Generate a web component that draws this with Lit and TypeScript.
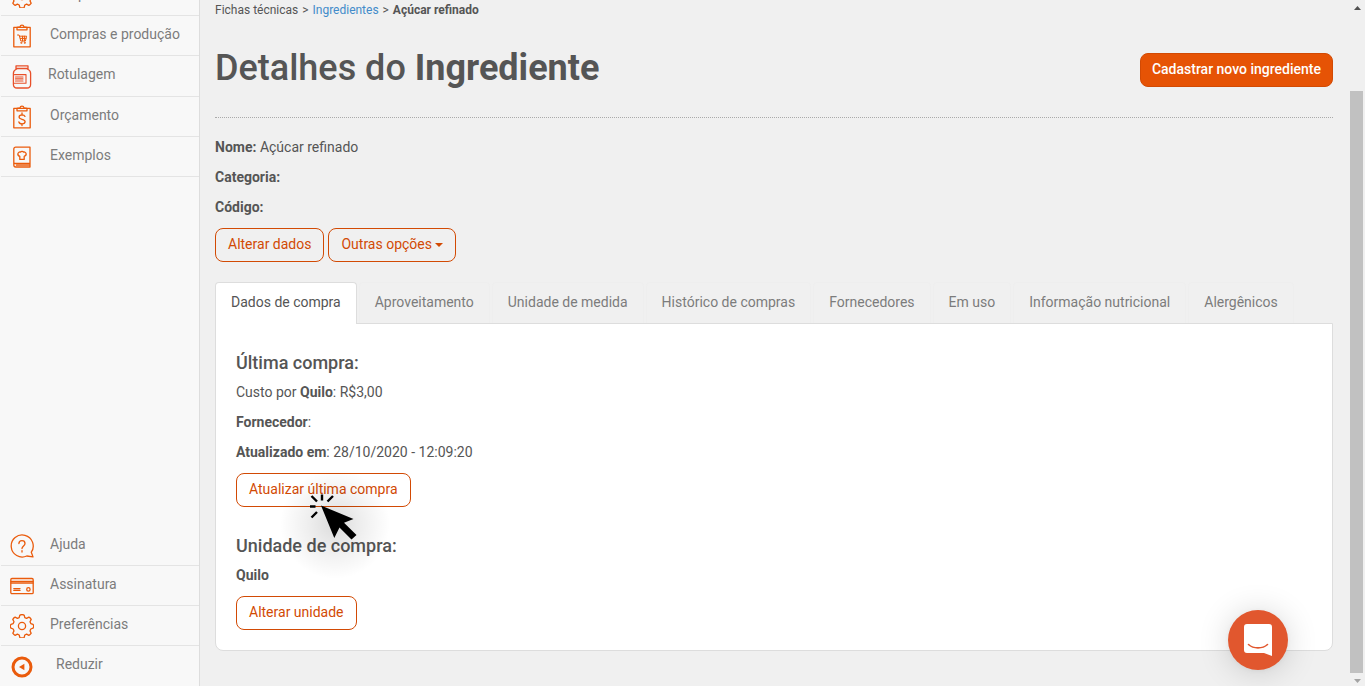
import { LitElement, html, css, svg, nothing } from "lit";
import { customElement, property, state } from "lit/decorators.js";

const gear = svg`<path d="M9.800 1.200Q10.500.6 12 .6t2.200.6l.6 2.400 1.800.8 2.300-1.200q1.200.4 2.300 2.200l-1.200 2.300.8 1.900 2.200.8q.7.8.7 1.900t-.7 1.900l-2.200.8-.8 1.900 1.200 2.300q-1.100 1.800-2.300 2.200l-2.300-1.200-1.800.8-.6 2.400q-.7.600-2.200.6t-2.200-.6l-.6-2.400-1.800-.8-2.300 1.200q-1.200-.4-2.300-2.200l1.200-2.300-.8-1.900-2.200-.8q-.7-.8-.7-1.900t.7-1.900l2.200-.8.8-1.900-1.200-2.300q1.100-1.800 2.300-2.200l2.300 1.200 1.800-.8z"/><circle cx="12" cy="12" r="3.600"/>`;
const clipboard = svg`<path d="M3.800 3.400h16.400v19.400H3.800z"/><path d="M7 3.400v2.400h10V3.400l-3-.6c-.4-2.200-3.600-2.200-4 0z"/>`;

const icons: Record<string, unknown> = {
  gear,
  cart: svg`${clipboard}<path d="M7.500 11h1.600l1.700 6h4.600l1.200-4.800H9.600M10.400 14.400h5.600M12.500 12.200v4.800M14.400 12.200v4.800" stroke-width="1"/><circle cx="11.400" cy="18.800" r=".4"/><circle cx="14.800" cy="18.800" r=".4"/>`,
  jar: svg`<path d="M6 .9h12v2.600H6z"/><path d="M6.600 4C4.400 5 3.400 6.200 3.400 8.200v11c0 2.400 1.200 3.800 3.600 3.800h10c2.400 0 3.600-1.400 3.600-3.800v-11c0-2-1-3.200-3.200-4.200"/><path d="M4.500 9.600h11.500v8.600H4.500M5.500 12h7.500M5.500 13.900h7.500M5.500 16h7.500" stroke-width="1.100"/>`,
  money: svg`${clipboard}<path d="M15 11.400c-.4-1-1.500-1.500-3-1.500-1.700 0-2.900.8-2.900 2.200 0 3 6 1.400 6 4.500 0 1.400-1.200 2.200-3 2.200-1.700 0-2.900-.6-3.200-1.800M12 8v2M12 18.800v1.800"/>`,
  book: svg`<path d="M20 2.200v19.800H5.700c-1.100 0-1.900-.8-1.900-1.900V4c0-1.100.8-1.800 1.900-1.800zM4.500 18.500H20M6.500 20.200h13"/><path d="M9.800 14.400v-3c-3.600-1.400-1.400-5.200.6-4.200.8-1.200 2.500-1.200 3.200 0 2.100-1 4.200 2.800.6 4.200v3z"/>`,
  help: svg`<path d="M21.300 18.200A11 11 0 1 0 16.800 22l6.200.9z"/><path d="M8.900 9.500C9 5.600 15 5.700 15 9.400c0 2.400-3 2.700-3 5.200M12 16.600v1.400"/>`,
  card: svg`<rect x=".8" y="4.500" width="22.400" height="15.200" rx="1.200"/><path d="M1 7.300h22M1 9h22M3.800 14.600H10M3.800 16.400H10"/><circle cx="18.400" cy="15.400" r="1.700"/>`,
  collapse: svg`<circle cx="12" cy="12" r="9" stroke-width="3"/><path d="M14.400 8.800v6.400L9 12z" fill="currentColor" stroke="none"/>`,
};

@customElement("nav-item")
class NavItem extends LitElement {
  @property() icon = "";
  @property() label = "";

  static styles = css`
    :host { display: block; }
    .link {
      display: flex;
      align-items: center;
      height: 39px;
      padding: 0 9px;
      color: #7c7c7c;
      font-size: 14px;
      line-height: 20px;
      text-decoration: none;
    }
    .icon {
      width: 24px;
      height: 24px;
      margin: 1px 16px 0 0;
      flex: none;
      color: #ea5b0c;
      fill: none;
      stroke: currentColor;
      stroke-width: 1.3;
      stroke-linejoin: round;
      stroke-linecap: round;
    }
    .label { margin-bottom: 4px; white-space: nowrap; }
    .indent { margin-left: 6px; }
    .jar { stroke: #e8502a; margin-right: 14px; }
    .tall { height: 40px; }
  `;

  render() {
    return html`<a class="link ${this.icon === "jar" || this.icon === "collapse" ? "tall" : ""}" href="#">
      <svg class="icon ${this.icon}" viewBox="0 0 24 24" aria-hidden="true">${icons[this.icon]}</svg>
      <span class="label ${this.icon === "collapse" ? "indent" : ""}">${this.label}</span>
    </a>`;
  }
}

@customElement("app-root")
class AppRoot extends LitElement {
  @state() private tab = 0;

  private tabs = [
    "Dados de compra",
    "Aproveitamento",
    "Unidade de medida",
    "Histórico de compras",
    "Fornecedores",
    "Em uso",
    "Informação nutricional",
    "Alergênicos",
  ];

  private mainNav = [
    ["gear", "Setup"],
    ["cart", "Compras e produção"],
    ["jar", "Rotulagem"],
    ["money", "Orçamento"],
    ["book", "Exemplos"],
  ];

  private footNav = [
    ["help", "Ajuda"],
    ["card", "Assinatura"],
    ["gear", "Preferências"],
    ["collapse", "Reduzir"],
  ];

  static styles = css`
    :host {
      display: flex;
      height: 100vh;
      overflow: hidden;
      background: #f0f0f0;
      color: #555;
      font: 14px/20px Roboto, "Liberation Sans", sans-serif;
    }
    .sidebar {
      display: flex;
      flex-direction: column;
      justify-content: space-between;
      flex: none;
      width: 200px;
      box-sizing: border-box;
      padding-left: 1px;
      border-right: 1px solid #ddd;
      background: #f8f8f8;
    }
    .group { display: flex; flex-direction: column; }
    .scrolled { margin-top: -24px; }
    .row { border-bottom: 1px solid #e4e4e4; }
    .foot .row:last-child { border-bottom: 0; }
    .main { flex: 1; min-width: 0; padding: 0 16px 0 15px; }
    .crumbs { font-size: 12px; }
    .crumbs a { color: #428bca; text-decoration: none; }
    .sep { padding: 0 1px; }
    .head {
      display: flex;
      align-items: center;
      justify-content: space-between;
      padding: 27px 0 24px;
      margin-bottom: 19px;
      border-bottom: 1px dotted #aaa;
    }
    .title { margin: 0 0 4px; font-size: 36px; line-height: 42px; font-weight: 500; }
    b { font-weight: 700; }
    .text { margin: 0 0 10px; }
    .btn {
      height: 34px;
      padding: 0 12px 2px;
      border: 1px solid #d24a04;
      border-radius: 8px;
      background: transparent;
      color: #d24a04;
      font: inherit;
      white-space: nowrap;
    }
    .primary { background: #e65305; color: #fff; font-weight: 500; padding: 0 11px 2px; }
    .actions { display: flex; gap: 4px; margin: 11px 0 20px; }
    .caret {
      display: inline-block;
      border: 4px solid transparent;
      border-top-color: currentColor;
      border-bottom: 0;
      vertical-align: middle;
    }
    .tabs { display: flex; gap: 2px; }
    .tab {
      height: 41px;
      padding: 0 15px 2px;
      border: 1px solid #eee;
      border-bottom: 0;
      border-radius: 4px 4px 0 0;
      background: transparent;
      color: #7c7c7c;
      font: inherit;
      white-space: nowrap;
    }
    .active {
      height: 42px;
      margin-bottom: -1px;
      padding-bottom: 3px;
      border-color: #ddd;
      background: #fff;
      color: #555;
      z-index: 1;
    }
    .panel {
      padding: 29px 20px 20px;
      border: 1px solid #ddd;
      border-radius: 0 0 8px 8px;
      background: #fff;
    }
    .subtitle { margin: 0 0 9px; font-size: 18px; line-height: 20px; font-weight: 500; }
    .spaced { margin-top: 29px; }
    .action { margin-top: 11px; }
    .target { position: relative; width: fit-content; }
    .pointer { position: absolute; left: 72px; top: 19px; width: 50px; height: 50px; z-index: 2; overflow: visible; pointer-events: none; }
    .glow {
      position: absolute;
      left: 44px;
      top: -4px;
      width: 110px;
      height: 110px;
      background: radial-gradient(closest-side, #00000024, #00000010 50%, transparent);
      pointer-events: none;
    }
    .scrollbar {
      display: flex;
      flex-direction: column;
      align-items: center;
      flex: none;
      width: 16px;
    }
    .arrow { width: 7px; height: 4px; margin-top: 6px; fill: #505050; }
    .thumb { width: 13px; flex: 1; margin: 81px 2px 0 1px; background: #c1c1c1; }
    .down { margin-bottom: 3px; fill: #a3a3a3; }
    .chat {
      position: fixed;
      right: 77px;
      bottom: 16px;
      width: 60px;
      height: 60px;
      padding: 14px 16px;
      border: 0;
      border-radius: 50%;
      background: #e1572e;
      box-shadow: 0 1px 6px #0000000f, 0 2px 32px #00000029;
    }
    .face { display: block; width: 28px; height: 32px; }
  `;

  private nav(items: string[][]) {
    return items.map(([icon, label]) => html`<nav-item class="row" icon=${icon} label=${label}></nav-item>`);
  }

  private pointer() {
    return html`<span class="glow"></span>
      <svg class="pointer" viewBox="0 0 50 50" aria-hidden="true">
        <path d="M13 13.500 45.500 27 36 30.700 48.500 43 43.500 47.500 31.500 35.500 26.300 46z" />
        <path d="M3.500 4l5.500 5.500M14 2.500v6M25 4l-5.500 5.500M2 14.500h5.500M9 20l-5.500 5.500" fill="none" stroke="#000" stroke-width="2.400" />
      </svg>`;
  }

  render() {
    return html`
      <nav class="sidebar">
        <div class="group scrolled">${this.nav(this.mainNav)}</div>
        <div class="group foot">${this.nav(this.footNav)}</div>
      </nav>
      <main class="main">
        <div class="crumbs">Fichas técnicas <span class="sep">&gt;</span> <a href="#">Ingredientes</a> <span class="sep">&gt;</span> <b>Açúcar refinado</b></div>
        <header class="head">
          <h1 class="title">Detalhes do <b>Ingrediente</b></h1>
          <button class="btn primary">Cadastrar novo ingrediente</button>
        </header>
        <p class="text"><b>Nome:</b> Açúcar refinado</p>
        <p class="text"><b>Categoria:</b></p>
        <p class="text"><b>Código:</b></p>
        <div class="actions">
          <button class="btn">Alterar dados</button>
          <button class="btn">Outras opções <span class="caret"></span></button>
        </div>
        <div class="tabs" role="tablist">
          ${this.tabs.map(
            (t, i) => html`<button
              class="tab ${i === this.tab ? "active" : ""}"
              role="tab"
              aria-selected=${i === this.tab}
              @click=${() => (this.tab = i)}
            >${t}</button>`
          )}
        </div>
        ${this.tab === 0
          ? html`<section class="panel">
              <h2 class="subtitle">Última compra:</h2>
              <p class="text">Custo por <b>Quilo</b>: R$3,00</p>
              <p class="text"><b>Fornecedor</b>:</p>
              <p class="text"><b>Atualizado em</b>: 28/10/2020 - 12:09:20</p>
              <div class="target action"><button class="btn">Atualizar última compra</button>${this.pointer()}</div>
              <h2 class="subtitle spaced">Unidade de compra:</h2>
              <p class="text"><b>Quilo</b></p>
              <div class="action"><button class="btn">Alterar unidade</button></div>
            </section>`
          : nothing}
      </main>
      <div class="scrollbar" aria-hidden="true">
        <svg class="arrow" viewBox="0 0 7 4"><path d="M0 4 3.500 0 7 4z" /></svg>
        <div class="thumb"></div>
        <svg class="arrow down" viewBox="0 0 7 4"><path d="M0 0h7L3.500 4z" /></svg>
      </div>
      <button class="chat" aria-label="Chat">
        <svg class="face" viewBox="0 0 28 32" aria-hidden="true">
          <path fill="#fff" d="M3 0h22a3 3 0 0 1 3 3v29l-8-3H3a3 3 0 0 1-3-3V3a3 3 0 0 1 3-3z" />
          <path fill="none" stroke="#e1572e" stroke-width="1.600" stroke-linecap="round" d="M4.500 20.500c5 4.500 14 4.500 19 0" />
        </svg>
      </button>
    `;
  }
}
